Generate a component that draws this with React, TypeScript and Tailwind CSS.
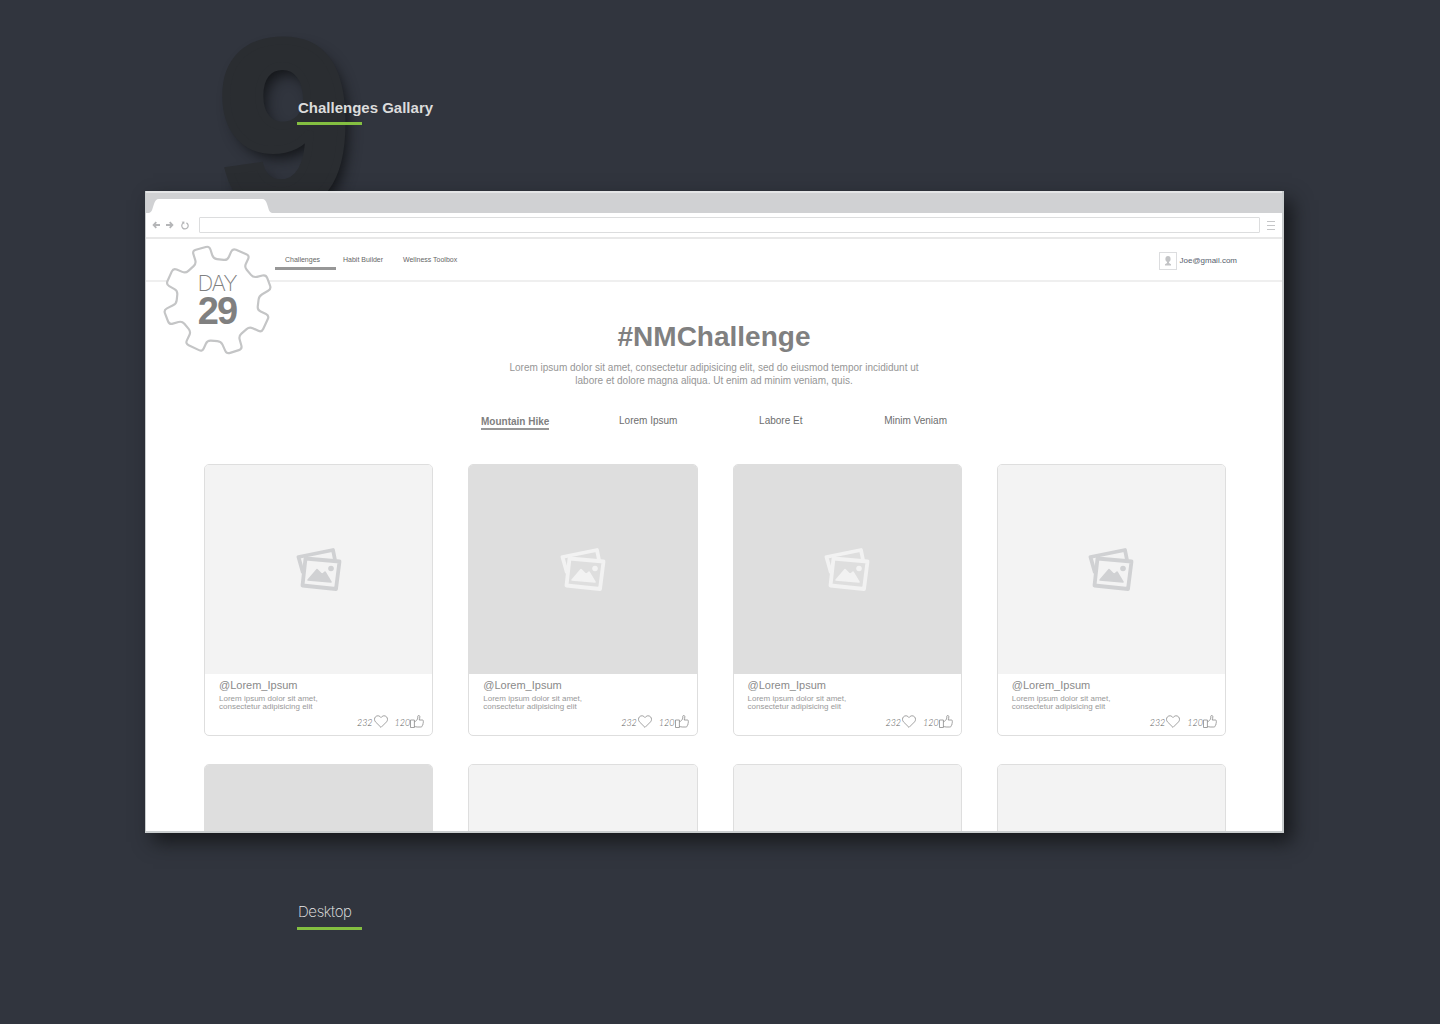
import React from 'react';

type Point = [number, number];

interface GalleryItem {
  id: number;
  dark: boolean;
}

const items: GalleryItem[] = [
  { id: 1, dark: false },
  { id: 2, dark: true },
  { id: 3, dark: true },
  { id: 4, dark: false },
  { id: 5, dark: true },
  { id: 6, dark: false },
  { id: 7, dark: false },
  { id: 8, dark: false },
];

const gearPoints: Point[] = [
  [169, 236], [157, 197], [208, 183], [220, 221], [262, 226], [278, 190], [329, 212],
  [313, 246], [340, 278], [378, 269], [394, 312], [357, 333], [352, 375], [388, 392],
  [365, 442], [328, 425], [296, 453], [307, 492], [260, 507], [243, 469], [202, 466],
  [187, 500], [136, 476], [153, 440], [126, 408], [88, 419], [71, 375], [109, 356],
  [113, 318], [78, 298], [100, 249], [137, 265],
];

// Closed outline with every corner softened by the given radius
const roundedPath = (points: Point[], radius: number) => {
  const towards = (from: Point, to: Point) => {
    const length = Math.hypot(to[0] - from[0], to[1] - from[1]);
    const t = radius / length;
    return `${from[0] + (to[0] - from[0]) * t} ${from[1] + (to[1] - from[1]) * t}`;
  };
  return (
    points
      .map((point, i) => {
        const prev = points[(i + points.length - 1) % points.length];
        const next = points[(i + 1) % points.length];
        return `${i === 0 ? 'M' : 'L'}${towards(point, prev)} Q${point[0]} ${point[1]} ${towards(point, next)}`;
      })
      .join(' ') + 'Z'
  );
};

const DayBadge: React.FC = () => (
  <div className="absolute left-[17px] top-[6px] h-[110px] w-[110px]">
    <svg viewBox="69 180 330 330" className="h-full w-full" aria-hidden="true">
      <path d={roundedPath(gearPoints, 11)} fill="#fff" stroke="#c4c5c6" strokeWidth="6.5" />
    </svg>
    <div className="absolute inset-0 flex flex-col items-center pr-[2px] pt-[26px] text-[#808080]">
      <span className="font-['Inter'] text-[22px] font-extralight leading-[24px] tracking-tighter">DAY</span>
      <span className="text-[38px] font-bold leading-[32px] tracking-tighter">29</span>
    </div>
  </div>
);

const BrowserChrome: React.FC = () => (
  <div>
    {/* Tab strip */}
    <div className="flex h-[22px] items-end border-t-2 border-[#e4e5e6] bg-[#d0d1d3] pl-[3px]">
      <svg width="123" height="14" viewBox="0 0 123 14" aria-hidden="true">
        <path d="M0 14 C3 13 3 11 5 5 C6 2 7 0 10 0 H113 C116 0 117 2 118 5 C120 11 120 13 123 14Z" fill="#fff" />
      </svg>
    </div>
    {/* Toolbar */}
    <div className="flex h-[26px] items-center border-b-2 border-[#e8e8e8] pl-[6px] pr-[7px]">
      <button type="button" aria-label="Back" className="mr-[6px]">
        <svg width="8" height="8" viewBox="0 0 8 8" fill="none" stroke="#b5b6b8" strokeWidth="1.8">
          <path d="M8 4 H2 M4.3 1.2 L1.6 4 L4.3 6.8" />
        </svg>
      </button>
      <button type="button" aria-label="Forward" className="mr-[7px]">
        <svg width="8" height="8" viewBox="0 0 8 8" fill="none" stroke="#b5b6b8" strokeWidth="1.8">
          <path d="M0 4 H6 M3.7 1.2 L6.4 4 L3.7 6.8" />
        </svg>
      </button>
      <button type="button" aria-label="Reload" className="mr-[10px]">
        <svg width="8" height="9" viewBox="0 0 8 9" fill="none" stroke="#b5b6b8" strokeWidth="1.2">
          <path d="M5.4 1.9 A3.2 3.2 0 1 1 2.2 2.1" />
          <path d="M.6 .8 L3.4 .6 L3.2 3.4Z" fill="#b5b6b8" stroke="none" />
        </svg>
      </button>
      <input
        type="text"
        aria-label="Address"
        className="h-[16px] min-w-0 flex-1 rounded-[1px] border border-[#dcddde] bg-white px-1 text-[8px] outline-none"
      />
      <button type="button" aria-label="Menu" className="ml-[7px]">
        <svg width="8" height="9" viewBox="0 0 8 9" stroke="#c5c6c8">
          <path d="M0 .5 H8 M0 4.5 H8 M0 8.5 H8" />
        </svg>
      </button>
    </div>
  </div>
);

const SiteHeader: React.FC = () => (
  <header className="relative flex h-[43px] items-start justify-between border-b-2 border-[#efefef] pl-[129px] pr-[45px]">
    <nav className="flex text-[7px] leading-[8px] text-[#666]">
      <a href="#challenges" className="mt-[17px] h-[14px] w-[61px] border-b-3 border-[#979797] pl-[10px]">
        Challenges
      </a>
      <a href="#habits" className="mt-[17px] w-[60px] pl-[7px]">
        Habit Builder
      </a>
      <a href="#wellness" className="mt-[17px] whitespace-nowrap pl-[7px]">
        Wellness Toolbox
      </a>
    </nav>
    <a href="#account" className="mt-[13px] flex items-center text-[8px] text-[#55606c]">
      <span className="mr-[3px] flex h-[18px] w-[18px] items-center justify-center border border-[#dcdddf]">
        <svg width="8" height="10" viewBox="0 0 8 10" fill="#c3c4c6" aria-hidden="true">
          <ellipse cx="4" cy="3" rx="2.6" ry="3" />
          <path d="M3 5 H5 V7 L7 8.2 V9.4 H1 V8.2 L3 7Z" />
        </svg>
      </span>
      Joe@gmail.com
    </a>
    <DayBadge />
  </header>
);

const Filters: React.FC = () => (
  <div className="mx-auto mt-[28px] flex w-[466px] items-start justify-between text-[10px] leading-[12px] text-[#6e6e6e]">
    <button type="button" className="mt-px border-b-2 border-[#979797] font-bold text-[#808080]">
      Mountain Hike
    </button>
    <button type="button">Lorem Ipsum</button>
    <button type="button" className="px-3">Labore Et</button>
    <button type="button">Minim Veniam</button>
  </div>
);

const PhotosIcon: React.FC<{ dark: boolean }> = ({ dark }) => (
  <svg
    width="46"
    height="44"
    viewBox="0 0 46 44"
    fill="none"
    className={dark ? 'text-[#f2f2f2]' : 'text-[#d0d1d3]'}
    aria-hidden="true"
  >
    <path
      d="M7 25 L2.5 9 L37 2 L39 12"
      stroke="currentColor"
      strokeWidth="3.8"
      strokeLinejoin="round"
    />
    <path
      d="M9.5 10.5 L43.5 13.5 L40 41 L6.5 37.5Z"
      className={dark ? 'fill-[#dedede]' : 'fill-[#f3f3f3]'}
      stroke="currentColor"
      strokeWidth="3.8"
      strokeLinejoin="round"
    />
    <path
      d="M12 32 L21 21.5 L26 26.5 L29 24 L35 34Z"
      fill="currentColor"
      stroke="currentColor"
      strokeWidth="1.5"
      strokeLinejoin="round"
    />
    <circle cx="35" cy="20.5" r="2.8" fill="currentColor" />
  </svg>
);

const HeartIcon: React.FC = () => (
  <svg width="14" height="13" viewBox="0 0 14 13" fill="none" stroke="#8a8a8a" strokeWidth=".8" aria-hidden="true">
    <path d="M7 12.4 L1.4 6.8 C.2 5.4 .2 3.2 1.4 1.9 C3 .2 5.6 .4 7 2.6 C8.4 .4 11 .2 12.6 1.9 C13.8 3.2 13.8 5.4 12.6 6.8Z" />
  </svg>
);

const ThumbIcon: React.FC = () => (
  <svg width="14" height="13" viewBox="0 0 14 13" fill="none" stroke="#8a8a8a" strokeWidth=".8" aria-hidden="true">
    <path d="M.5 5 H4.4 V12.5 H.5Z" />
    <path d="M4.4 6.8 C6 6.3 7.6 4.6 7.8 3 V1.2 C8 .2 9.6 .2 9.8 1.4 C9.9 2.6 9.6 4 9.2 5 H12.4 C13.6 5.2 13.7 6.5 12.9 7 C13.6 7.5 13.5 8.6 12.7 8.9 C13.1 9.6 12.9 10.3 12.2 10.6 C12.2 11.6 11.6 12 10.8 12 H7.2 C6 12 5.4 11.5 4.4 11.5" />
  </svg>
);

const GalleryCard: React.FC<{ item: GalleryItem }> = ({ item }) => (
  <article className="overflow-hidden rounded-[5px] border border-[#dedede] bg-white">
    <div className={`flex h-[209px] items-center justify-center ${item.dark ? 'bg-[#dedede]' : 'bg-[#f3f3f3]'}`}>
      <PhotosIcon dark={item.dark} />
    </div>
    <div className="pb-[7px] pl-[14px] pr-[8px] pt-[4px] text-[#8a8a8a]">
      <h2 className="text-[11px] leading-[14px]">@Lorem_Ipsum</h2>
      <p className="mt-[3px] text-[8px] leading-[8px] text-[#999]">
        Lorem ipsum dolor sit amet,
        <br />
        consectetur adipisicing elit
      </p>
      <div className="mt-[4px] flex items-end justify-end font-['Lato'] text-[9px] font-light italic leading-[11px] text-[#606060]">
        <button type="button" className="mr-[7px] flex items-end gap-px" aria-label="232 likes">
          232
          <HeartIcon />
        </button>
        <button type="button" className="flex items-end" aria-label="120 thumbs up">
          120
          <ThumbIcon />
        </button>
      </div>
    </div>
  </article>
);

const App: React.FC = () => {
  return (
    <div className="min-h-screen bg-[#31353e] pl-[145px] pr-[156px] font-['Liberation_Sans',sans-serif]">
      {/* Section title */}
      <div className="relative h-[191px] pl-[152px] pt-[99px]">
        <span
          className="absolute left-[73px] top-[6px] select-none text-[238px] font-bold leading-[238px] text-[#2a2d31] [-webkit-text-stroke:8px_#2a2d31] [text-shadow:6px_8px_14px_#131518]"
          aria-hidden="true"
        >
          9
        </span>
        <h1 className="relative pl-px text-[15px] font-bold leading-[18px] text-[#dcdcdc]">Challenges Gallary</h1>
        <div className="relative mt-[5px] h-[3px] w-[65px] bg-[#84bf41]" />
      </div>

      {/* Browser window */}
      <div className="relative border-l border-r-2 border-b-2 border-[#c9cdce] bg-white shadow-[8px_9px_18px_#17191c]">
        <BrowserChrome />
        <SiteHeader />
        <main>
          <h2 className="mt-[38px] text-center text-[28px] font-bold leading-[34px] text-[#808080]">#NMChallenge</h2>
          <p className="mx-auto mt-[7px] w-[430px] text-center text-[10px] leading-[13px] text-[#969696]">
            Lorem ipsum dolor sit amet, consectetur adipisicing elit, sed do eiusmod tempor incididunt ut labore et
            dolore magna aliqua. Ut enim ad minim veniam, quis.
          </p>
          <Filters />
          <div className="mt-[34px] grid max-h-[367px] grid-cols-4 gap-x-[35px] gap-y-[28px] overflow-hidden pl-[58px] pr-[56px]">
            {items.map((item) => (
              <GalleryCard key={item.id} item={item} />
            ))}
          </div>
        </main>
      </div>

      {/* Device label */}
      <div className="pl-[152px] pt-[70px]">
        <p className="pl-px font-['Inter'] text-[15px] font-extralight leading-[18px] tracking-tight text-[#ececec]">
          Desktop
        </p>
        <div className="mt-[6px] h-[3px] w-[65px] bg-[#84bf41]" />
      </div>
    </div>
  );
};

export default App;
